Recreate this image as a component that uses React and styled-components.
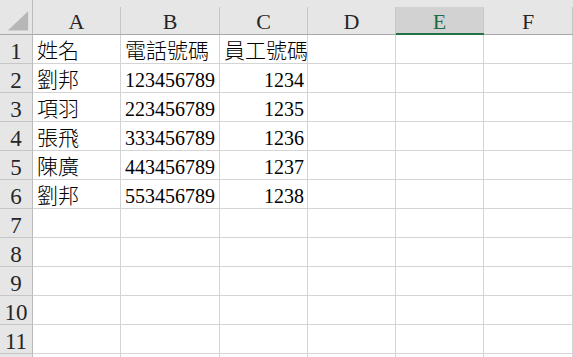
import styled, { createGlobalStyle } from 'styled-components'

const GlobalStyle = createGlobalStyle`
   html, body {
      margin: 0;
      padding: 0;
      background: #ffffff;
   }
   body {
      font-family: "Liberation Serif", serif;
   }
`

const columns = ['A', 'B', 'C', 'D', 'E', 'F']
const widths = [88, 99, 88, 88, 88, 89]
const selectedCol = 'E'

const data = [
   ['姓名', '電話號碼', '員工號碼'],
   ['劉邦', '123456789', 1234],
   ['項羽', '223456789', 1235],
   ['張飛', '333456789', 1236],
   ['陳廣', '443456789', 1237],
   ['劉邦', '553456789', 1238],
]

const ROWS = 12

const isCjk = (v) => typeof v === 'string' && /[\u4e00-\u9fff]/.test(v)

const Sheet = () => {
   const rows = []
   for (let r = 0; r < ROWS; r++) rows.push(data[r] || [])

   return (
      <Grid>
         <Corner>
            <svg width="33" height="34" viewBox="0 0 33 34">
               <polygon points="8,31 29,31 29,11" fill="#b7b7b7" />
            </svg>
         </Corner>
         {columns.map((c) => (
            <ColHead key={c} $selected={c === selectedCol}>
               <ColLabel $selected={c === selectedCol}>{c}</ColLabel>
            </ColHead>
         ))}
         {rows.map((row, r) => (
            <Row key={r}>
               {/* the last row is only a sliver at the window's bottom edge */}
               <RowHead>{r < ROWS - 1 ? r + 1 : ''}</RowHead>
               {columns.map((c, i) => {
                  const v = row[i]
                  return (
                     <Cell key={c} $numeric={typeof v === 'number'}>
                        {v !== undefined ? <CellText $cjk={isCjk(v)}>{String(v)}</CellText> : null}
                     </Cell>
                  )
               })}
            </Row>
         ))}
      </Grid>
   )
}

const App = () => (
   <>
      <GlobalStyle />
      <Sheet />
   </>
)

const Grid = styled.div`
   display: grid;
   grid-template-columns: 33px ${widths.map((w) => `${w}px`).join(' ')};
   grid-template-rows: 35px repeat(${ROWS}, 29px);
   width: 573px;
   height: 357px;
   overflow: hidden;
   font-family: "Liberation Serif", serif;
   font-size: 20px;
   color: #000;
`

const Corner = styled.div`
   background: #e6e6e6;
   border-right: 1px solid #bcbcbc;
   border-bottom: 1px solid #a8a8a8;
   box-sizing: border-box;
   display: flex;
   svg {
      display: block;
   }
`

const ColHead = styled.div`
   background: #e6e6e6;
   box-sizing: border-box;
   border-bottom: ${(p) => (p.$selected ? '2px solid #217346' : '1px solid #a8a8a8')};
   padding-top: 7px;
   display: flex;
`

const ColLabel = styled.div`
   flex: 1;
   display: flex;
   align-items: flex-end;
   justify-content: center;
   border-right: 1px solid #c6c6c6;
   background: ${(p) => (p.$selected ? '#d2d2d2' : 'transparent')};
   color: ${(p) => (p.$selected ? '#1f6b45' : '#262626')};
   font-size: 22px;
   line-height: 1;
   padding-bottom: ${(p) => (p.$selected ? '0' : '1px')};
`

const Row = styled.div`
   display: contents;
`

const RowHead = styled.div`
   background: #e6e6e6;
   box-sizing: border-box;
   border-right: 1px solid #bcbcbc;
   border-bottom: 1px solid #c6c6c6;
   display: flex;
   align-items: flex-end;
   justify-content: center;
   color: #262626;
   font-size: 23px;
   line-height: 1;
`

const Cell = styled.div`
   box-sizing: border-box;
   border-right: 1px solid #d4d4d4;
   border-bottom: 1px solid #d4d4d4;
   display: flex;
   align-items: flex-end;
   justify-content: ${(p) => (p.$numeric ? 'flex-end' : 'flex-start')};
   padding: 0 3px 0 4px;
   white-space: nowrap;
   overflow: visible;
   min-width: 0;
`

const CellText = styled.span`
   font-family: ${(p) => (p.$cjk ? '"Noto Sans CJK TC", sans-serif' : '"Liberation Serif", serif')};
   font-size: ${(p) => (p.$cjk ? '21px' : '20px')};
   font-weight: ${(p) => (p.$cjk ? 300 : 400)};
   line-height: 1;
   padding-bottom: ${(p) => (p.$cjk ? '3px' : '2px')};
   position: relative;
   z-index: 1;
`

export default App
